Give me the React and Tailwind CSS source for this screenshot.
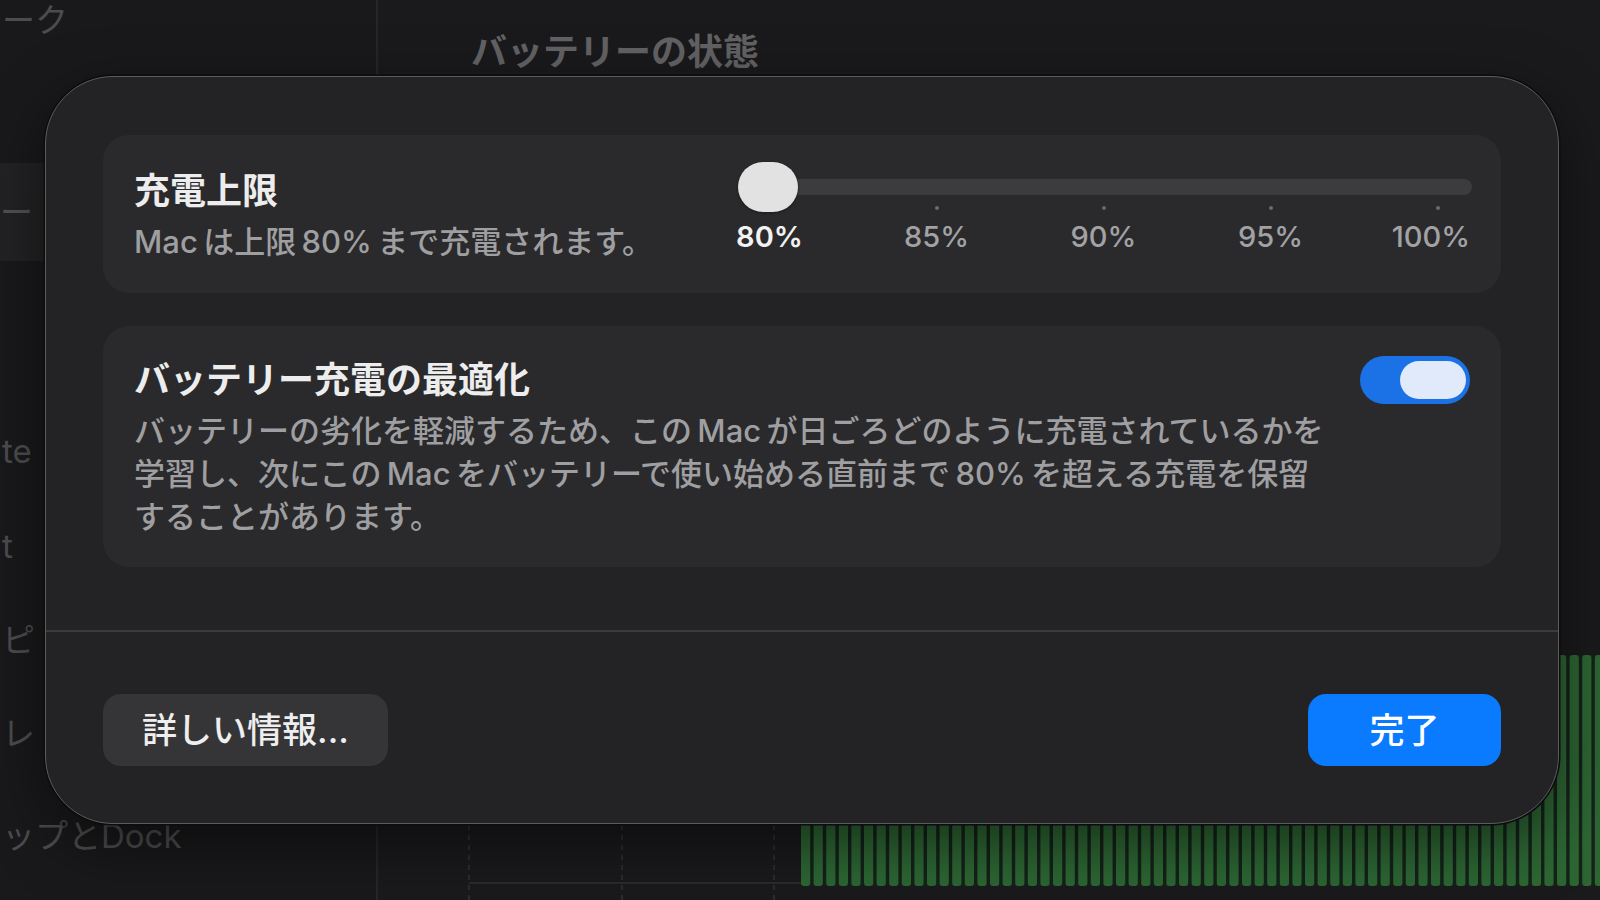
import React from "react"

const FONT = "font-['Inter','Noto_Sans_CJK_JP',sans-serif]"

function UsageChart() {
    const bars = []
    for (let i = 0; i < 64; i++) {
        bars.push(<rect key={i} x={423 + i * 12.6} y={0} width={9.2} height={231} rx={3} fill="#2d6633" />)
    }
    return (
        <svg width="1222" height="245" viewBox="0 0 1222 245" className="block">
            <line x1="91" y1="170" x2="91" y2="245" stroke="#2c2c2e" strokeWidth="2" strokeDasharray="5 5" />
            <line x1="244" y1="170" x2="244" y2="245" stroke="#2c2c2e" strokeWidth="2" strokeDasharray="5 5" />
            <line x1="396" y1="170" x2="396" y2="245" stroke="#2c2c2e" strokeWidth="2" strokeDasharray="5 5" />
            <line x1="91" y1="228" x2="1222" y2="228" stroke="#2a2a2c" strokeWidth="2" />
            <rect x="423" y="0" width="799" height="231" fill="#14221a" />
            {bars}
        </svg>
    )
}

function Background() {
    return (
        <div className="flex h-full">
            <div className="w-[378px] shrink-0 bg-[#19191b] border-r-2 border-[#262628] flex flex-col text-[33px] text-[#4c4c4e] leading-[40px]">
                <div className="pl-[2px]">ーク</div>
                <div className="mt-[123px] h-[98px] bg-[#222224] flex items-center">
                    <span className="text-[#505052]">ー</span>
                </div>
                <div className="mt-[170px] pl-[2px]">te</div>
                <div className="mt-[55px] pl-[2px]">t</div>
                <div className="mt-[54px] pl-[2px]">ピ</div>
                <div className="mt-[53px] pl-[2px]">レ</div>
                <div className="mt-[63px] pl-[2px] whitespace-nowrap">ップとDock</div>
            </div>
            <div className="flex-1 flex flex-col bg-[#1a1a1c]">
                <div className="pl-[93px] pt-[32px] text-[36px] font-semibold text-[#626264] leading-[40px]">バッテリーの状態</div>
                <div className="mt-auto">
                    <UsageChart />
                </div>
            </div>
        </div>
    )
}

function ChargeSlider() {
    const ticks = ["80%", "85%", "90%", "95%", "100%"]
    return (
        <div className="w-[734px] pt-[27px]">
            <div className="relative h-[44px]">
                <div className="absolute left-0 right-0 top-[17px] h-[16px] rounded-full bg-[#3c3c3e]" />
                <div className="absolute left-0 top-0 w-[60px] h-[50px] rounded-[25px] bg-[#e2e2e2] shadow-[0_1px_3px_rgba(0,0,0,0.4)]" />
            </div>
            <div className="flex -ml-[52px] h-[4px]">
                {ticks.map(t => (
                    <div key={t} className="w-[167px] shrink-0 flex justify-center">
                        <div className="w-[4px] h-[4px] rounded-full bg-[#6a6a6c]" />
                    </div>
                ))}
            </div>
            <div className="flex -ml-[52px] mt-[10px] text-[29px] leading-[34px] font-medium text-[#a2a2a4]">
                <div className="w-[167px] shrink-0 text-center font-semibold text-[#f2f2f2]">80%</div>
                <div className="w-[167px] shrink-0 text-center">85%</div>
                <div className="w-[167px] shrink-0 text-center">90%</div>
                <div className="w-[167px] shrink-0 text-center">95%</div>
                <div className="flex-1 text-right pr-[2px]">100%</div>
            </div>
        </div>
    )
}

export default function App() {
    return (
        <div className={`relative w-[1600px] h-[900px] overflow-hidden bg-[#1a1a1c] ${FONT}`}>
            <Background />

            <div className="absolute left-[45px] top-[76px] w-[1514px] h-[748px] rounded-[68px] border-[1.5px] border-[#5c5c5e] bg-[#232325] shadow-[0_0_0_1.5px_#0c0c0d,0_20px_60px_rgba(0,0,0,0.5)] flex flex-col">
                <div className="px-[57px] pt-[58px] flex flex-col gap-[33px]">
                    <div className="h-[158px] rounded-[26px] bg-[#2a2a2c] flex justify-between pl-[31px] pr-[29px]">
                        <div className="pt-[34px]">
                            <div className="text-[36px] leading-[44px] font-bold text-[#ededed]">充電上限</div>
                            <div className="mt-[7px] text-[31px] leading-[43px] font-medium text-[#9f9fa1] whitespace-nowrap">Mac&#8201;は上限&#8201;80%&#8201;まで充電されます。</div>
                        </div>
                        <ChargeSlider />
                    </div>

                    <div className="rounded-[26px] bg-[#2a2a2c] flex justify-between pl-[31px] pr-[31px] pt-[32px] pb-[29px]">
                        <div>
                            <div className="text-[36px] leading-[44px] font-bold text-[#ededed]">バッテリー充電の最適化</div>
                            <div className="mt-[7px] text-[31px] leading-[43px] font-medium text-[#9f9fa1] whitespace-nowrap">
                                バッテリーの劣化を軽減するため、この&#8201;Mac&#8201;が日ごろどのように充電されているかを<br />
                                学習し、次にこの&#8201;Mac&#8201;をバッテリーで使い始める直前まで&#8201;80%&#8201;を超える充電を保留<br />
                                することがあります。
                            </div>
                        </div>
                        <div className="-mt-[2px] w-[110px] h-[48px] rounded-full bg-[#1a72e6] flex items-center justify-end pr-[4px] shrink-0">
                            <div className="w-[66px] h-[38px] rounded-full bg-[#e0eafb]" />
                        </div>
                    </div>
                </div>

                <div className="mt-[63px] h-[2px] bg-[#3b3b3d]" />

                <div className="flex justify-between px-[57px] pt-[62px]">
                    <button className="w-[285px] h-[72px] rounded-[18px] bg-[#353537] text-[35px] font-medium text-[#eeeeee]">詳しい情報...</button>
                    <button className="w-[193px] h-[72px] rounded-[18px] bg-[#0a7bff] text-[35px] font-medium text-white">完了</button>
                </div>
            </div>
        </div>
    )
}
